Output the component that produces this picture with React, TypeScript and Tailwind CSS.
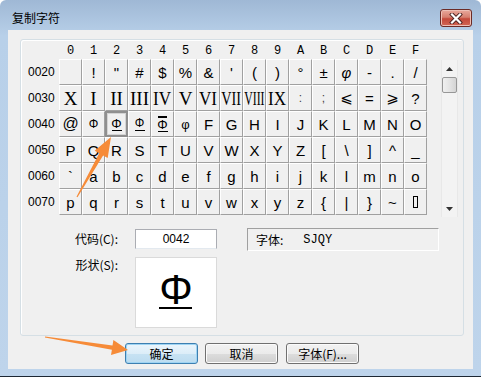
import type { ReactNode } from 'react';

const sans = "font-['Liberation_Sans',Arial,sans-serif]";
const cjk = "font-['Noto_Sans_CJK_SC','Liberation_Sans',sans-serif]";

function PhiMark({ top, bottom, small }: { top?: boolean; bottom?: boolean; small?: boolean }) {
  return (
    <span className="flex flex-col items-center leading-none">
      {top && <span className="h-[1.5px] w-[9px] bg-black" />}
      <span className={`${sans} ${small ? 'text-[12px]' : 'text-[13px]'} leading-[13px]`}>Φ</span>
      {bottom && <span className="h-[1.5px] w-[10px] bg-black" />}
    </span>
  );
}

const roman = "font-['Liberation_Serif',serif] text-[19px]";

const rows: { label: string; cells: ReactNode[] }[] = [
  {
    label: '0020',
    cells: ['', '!', '"', '#', '$', '%', '&', "'", '(', ')', '°', '±', <span className="italic">φ</span>, '-', '.', '/'],
  },
  {
    label: '0030',
    cells: [
      <span className={roman}>X</span>,
      <span className={roman}>I</span>,
      <span className={roman}>II</span>,
      <span className={roman}>III</span>,
      <span className={`${roman} inline-block scale-x-[0.9]`}>IV</span>,
      <span className={roman}>V</span>,
      <span className={`${roman} inline-block scale-x-[0.9]`}>VI</span>,
      <span className={`${roman} inline-block scale-x-[0.75]`}>VII</span>,
      <span className={`${roman} inline-block scale-x-[0.62]`}>VIII</span>,
      <span className={`${roman} inline-block scale-x-[0.9]`}>IX</span>,
      <span className="text-[12px] text-[#444]">:</span>,
      <span className="text-[12px] text-[#444]">;</span>,
      <span className="font-['DejaVu_Sans',sans-serif] text-[15px]">⩽</span>,
      '=',
      <span className="font-['DejaVu_Sans',sans-serif] text-[15px]">⩾</span>,
      '?',
    ],
  },
  {
    label: '0040',
    cells: [
      <span className="text-[16px]">@</span>,
      <PhiMark small />,
      <PhiMark bottom />,
      <PhiMark bottom small />,
      <PhiMark top bottom />,
      <span className="text-[13px]">φ</span>,
      'F', 'G', 'H', 'I', 'J', 'K', 'L', 'M', 'N', 'O',
    ],
  },
  { label: '0050', cells: ['P', 'Q', 'R', 'S', 'T', 'U', 'V', 'W', 'X', 'Y', 'Z', '[', '\\', ']', '^', '_'] },
  { label: '0060', cells: ['`', 'a', 'b', 'c', 'd', 'e', 'f', 'g', 'h', 'i', 'j', 'k', 'l', 'm', 'n', 'o'] },
  {
    label: '0070',
    cells: [
      'p', 'q', 'r', 's', 't', 'u', 'v', 'w', 'x', 'y', 'z', '{', '|', '}', '~',
      <span className="inline-block h-[12px] w-[5px] border border-black" />,
    ],
  },
];

const headers = ['0', '1', '2', '3', '4', '5', '6', '7', '8', '9', 'A', 'B', 'C', 'D', 'E', 'F'];

function arrow(tail: [number, number], tip: [number, number], headLen: number, headHalf: number, tailW: number, baseW: number) {
  const dx = tip[0] - tail[0];
  const dy = tip[1] - tail[1];
  const len = Math.hypot(dx, dy);
  const ux = dx / len;
  const uy = dy / len;
  const nx = -uy;
  const ny = ux;
  const bx = tip[0] - ux * headLen;
  const by = tip[1] - uy * headLen;
  const pts: [number, number][] = [
    [tail[0] + nx * tailW, tail[1] + ny * tailW],
    [bx + nx * baseW, by + ny * baseW],
    [bx + nx * headHalf, by + ny * headHalf],
    tip,
    [bx - nx * headHalf, by - ny * headHalf],
    [bx - nx * baseW, by - ny * baseW],
    [tail[0] - nx * tailW, tail[1] - ny * tailW],
  ];
  return pts.map(p => `${p[0].toFixed(1)},${p[1].toFixed(1)}`).join(' ');
}

function Button({ children, primary }: { children: ReactNode; primary?: boolean }) {
  return (
    <div
      className={`flex h-[21px] w-[73px] items-center justify-center rounded-[3px] border text-[12px] text-black ${cjk} ${
        primary
          ? 'border-[#3c7fb1] bg-[linear-gradient(#eaf5fc_0%,#dcedf8_50%,#c7e2f3_51%,#bcdcf0_100%)] shadow-[inset_0_0_0_1px_#9fd4f3]'
          : 'border-[#707070] bg-[linear-gradient(#f2f2f2_0%,#ebebeb_50%,#dddddd_51%,#cfcfcf_100%)] shadow-[inset_0_0_0_1px_#fbfbfb]'
      }`}
    >
      {children}
    </div>
  );
}

export default function App() {
  return (
    <div className="relative flex h-[377px] w-[481px] flex-col overflow-hidden rounded-t-[6px] border-b border-[#1d2833] bg-[linear-gradient(#9fb8d5_0px,#b8d0e9_36px,#bed4eb_100%)]">
      {/* Title bar */}
      <div className="flex h-[30px] shrink-0 items-center justify-between pl-[12px] pr-[9px] pt-[6px]">
        <span className={`${cjk} text-[12px] text-black`}>复制字符</span>
        <div className="flex h-[18px] w-[32px] items-center justify-center rounded-[3px] border border-[#6b2b26] bg-[linear-gradient(#e9a99c_0%,#d67f6f_45%,#c4493a_55%,#d26654_100%)] shadow-[inset_0_0_0_1px_#eec0b6]">
          <svg width="14" height="11" viewBox="0 0 14 11">
            <path d="M3 1.5 L11 9.5 M11 1.5 L3 9.5" stroke="#4a2220" strokeWidth="4" strokeLinecap="square" />
            <path d="M3 1.5 L11 9.5 M11 1.5 L3 9.5" stroke="#ffffff" strokeWidth="2.2" strokeLinecap="square" />
          </svg>
        </div>
      </div>

      {/* Client area */}
      <div className="mx-[8px] flex h-[339px] shrink-0 flex-col bg-[#f0f0f0]">
        <div className="ml-[12px] mr-[9px] mt-[9px] flex h-[297px] flex-col rounded-[3px] border border-[#d5dfe5] shadow-[inset_1px_1px_0_#ffffff]">
          {/* Column headers */}
          <div className="flex h-[19px] items-center pl-[38px] pt-[2px]">
            {headers.map(h => (
              <span key={h} className="w-[23px] text-center font-['Liberation_Mono',monospace] text-[12px] text-black">
                {h}
              </span>
            ))}
          </div>

          {/* Grid + scrollbar */}
          <div className="flex items-start">
            <div className="flex flex-col">
              {rows.map(row => (
                <div key={row.label} className="flex h-[26px] items-center">
                  <span className={`w-[38px] pl-[7px] ${sans} text-[12px] text-black`}>{row.label}</span>
                  {row.cells.map((c, i) => {
                    const selected = row.label === '0040' && i === 2;
                    return (
                      <div
                        key={i}
                        className={`flex h-[26px] w-[23px] items-center justify-center bg-[#f0f0f0] ${sans} text-[15px] leading-none text-black ${
                          selected
                            ? 'border-2 border-[#8f8f8f] shadow-[inset_0_0_0_1px_#d4d4d4]'
                            : 'border border-b-[#a0a0a0] border-l-white border-r-[#a0a0a0] border-t-white'
                        }`}
                      >
                        {c}
                      </div>
                    );
                  })}
                </div>
              ))}
            </div>
            <div className="ml-[14px] mt-[1px] flex h-[157px] w-[17px] flex-col items-center border-x border-[#e8e8e8] bg-[#f3f3f3]">
              <div className="flex h-[17px] items-center justify-center">
                <svg width="7" height="4" viewBox="0 0 7 4">
                  <path d="M0 4 L3.5 0 L7 4 Z" fill="#333" />
                </svg>
              </div>
              <div className="h-[16px] w-[15px] rounded-[2px] border border-[#979797] bg-[linear-gradient(90deg,#f0f0f0,#e4e4e4_50%,#d4d4d4)]" />
              <div className="flex-1" />
              <div className="flex h-[17px] items-center justify-center">
                <svg width="7" height="4" viewBox="0 0 7 4">
                  <path d="M0 0 L7 0 L3.5 4 Z" fill="#333" />
                </svg>
              </div>
            </div>
          </div>

          {/* Code / shape / font */}
          <div className="mt-[12px] flex items-start">
            <div className="flex flex-col">
              <div className="flex h-[20px] items-center">
                <span className={`w-[97px] text-right ${cjk} text-[12px] text-black`}>代码(C):</span>
                <div className={`ml-[17px] flex h-[20px] w-[82px] items-center justify-center border border-[#abadb3] border-b-[#e3e9ef] bg-white ${sans} text-[12px] text-black`}>
                  0042
                </div>
              </div>
              <div className="mt-[8px] flex items-start">
                <span className={`w-[97px] pt-[1px] text-right ${cjk} text-[12px] leading-[14px] text-black`}>形状(S):</span>
                <div className="ml-[17px] flex h-[71px] w-[82px] items-center justify-center border border-[#dadada] bg-white pb-[4px]">
                  <div className="flex flex-col items-center">
                    <span className={`${sans} text-[42px] leading-[36px] text-black`}>Φ</span>
                    <span className="-mt-[1px] h-[2px] w-[33px] bg-black" />
                  </div>
                </div>
              </div>
            </div>
            <div className={`-mt-[1px] ml-[30px] flex h-[23px] w-[192px] items-center border border-b-white border-l-[#a0a0a0] border-r-white border-t-[#a0a0a0] pl-[8px] text-[12px] text-black`}>
              <span className={cjk}>字体:</span>
              <span className="ml-[20px] font-['Liberation_Mono',monospace]">SJQY</span>
            </div>
          </div>
        </div>

        {/* Buttons */}
        <div className="ml-[117px] mt-[7px] flex">
          <Button primary>确定</Button>
          <div className="ml-[7px]">
            <Button>取消</Button>
          </div>
          <div className="ml-[8px]">
            <Button>字体(F)...</Button>
          </div>
        </div>
      </div>

      {/* Annotation arrows */}
      <svg className="pointer-events-none absolute left-0 top-0" width="481" height="377" viewBox="0 0 481 377">
        <polygon points={arrow([77, 197], [111, 137], 20, 7.5, 0.6, 2.2)} fill="#f68b38" />
        <polygon points={arrow([45, 337], [128, 350], 16, 7.5, 0.6, 2.2)} fill="#f68b38" />
      </svg>
    </div>
  );
}
